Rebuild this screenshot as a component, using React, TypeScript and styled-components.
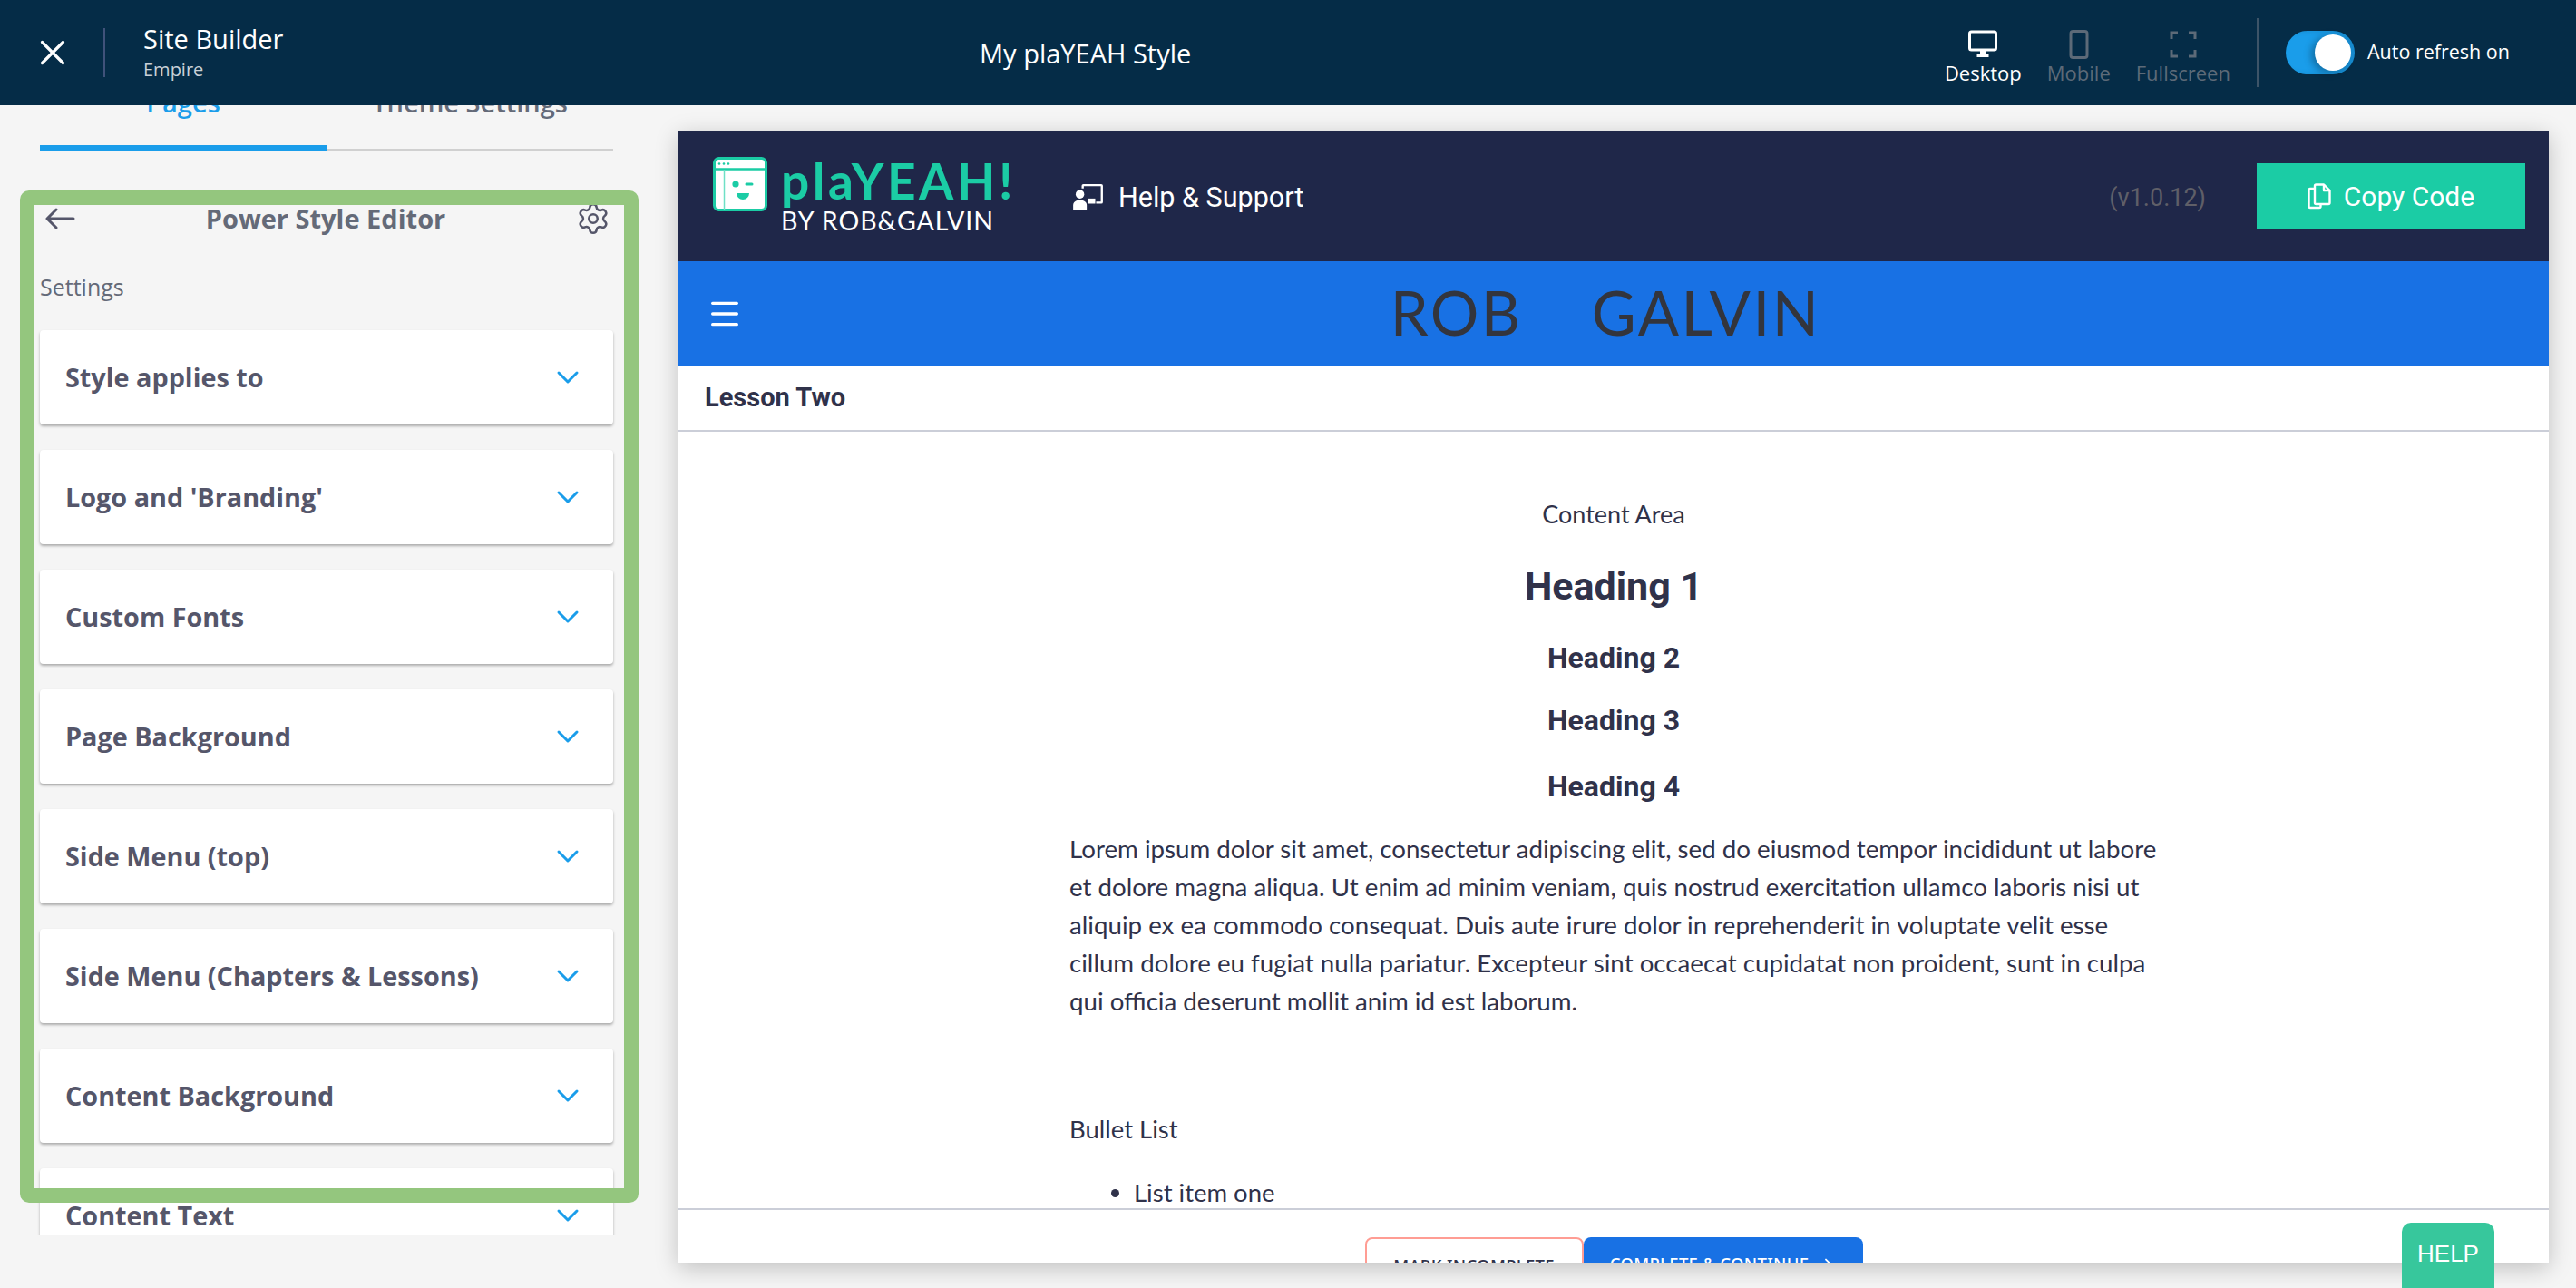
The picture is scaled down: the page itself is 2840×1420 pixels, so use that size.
import React from "react";
import styled, { createGlobalStyle } from "styled-components";
import { X, Settings, ChevronDown, Menu, ArrowRight } from "lucide-react";

const Global = createGlobalStyle`
  html, body { margin: 0; padding: 0; height: 1420px; width: 2840px; overflow: hidden; background: #f5f5f5; font-family: "Open Sans", sans-serif; }
  * { box-sizing: border-box; }
`;

const Page = styled.div`
  width: 2840px; height: 1420px; display: flex; flex-direction: column; position: relative; overflow: hidden; background: #f5f5f5;
`;
const TopBar = styled.header`
  height: 116px; flex: none; background: #052c47; display: flex; align-items: center; color: #fff; position: relative; z-index: 2;
`;
const BarLeft = styled.div`display: flex; align-items: center; padding-left: 35px; width: 1080px; flex: none;`;
const CloseBtn = styled.div`width: 46px; height: 46px; display: flex; align-items: center; justify-content: center; margin-right: 33px;`;
const BarDivider = styled.div`width: 2px; height: 54px; background: #40527a; margin-right: 42px;`;
const BarTitles = styled.div`display: flex; flex-direction: column; margin-top: -2px;`;
const BarTitle = styled.div`font-size: 29px; line-height: 38px; color: #fff;`;
const BarSub = styled.div`font-size: 20px; line-height: 28px; color: #c9d1d8; margin-top: 1px;`;
const BarCenter = styled.div`font-size: 29px; color: #fff; white-space: nowrap;`;
const BarRight = styled.div`flex: 1; display: flex; align-items: center; justify-content: flex-end; padding-right: 73px; height: 100%;`;
const ViewBtn = styled.div<{ $on?: boolean }>`
  display: flex; flex-direction: column; align-items: center; font-size: 22px; line-height: 30px; margin-left: 28px; padding-top: 11px;
  color: ${(p) => (p.$on ? "#fff" : "#5d6a78")}; svg { display: block; margin-bottom: 0; }
`;
const VDivider = styled.div`width: 3px; height: 76px; background: #3d5468; margin: 0 29px 0 29px;`;
const Toggle = styled.div`width: 76px; height: 48px; border-radius: 24px; background: #1a9dea; position: relative; box-shadow: inset -6px 0 6px rgba(0,0,0,.12);`;
const Knob = styled.div`position: absolute; right: 4px; top: 4px; width: 40px; height: 40px; border-radius: 50%; background: #fff; box-shadow: -4px 2px 8px rgba(0,0,0,.3);`;
const ToggleText = styled.div`font-size: 21.5px; color: #fff; margin-left: 14px; margin-top: -4px;`;

const Body = styled.div`flex: 1; display: flex; min-height: 0; position: relative;`;
const Side = styled.aside`width: 748px; flex: none; position: relative; padding: 0 0 0 44px; height: 1246px; overflow: hidden;`;
const Tabs = styled.div`width: 632px; height: 50px; display: flex; border-bottom: 2px solid #d0d0d0; align-items: flex-end;`;
const Tab = styled.div<{ $on?: boolean }>`
  flex: 1; height: 50px; margin-bottom: -2px; font-size: 29px; line-height: 1; font-weight: 600;
  display: flex; justify-content: center; color: ${(p) => (p.$on ? "#1a9dea" : "#646a78")};
  border-bottom: ${(p) => (p.$on ? "6px solid #1a9dea" : "none")};
  span { transform: translateY(-18px); display: block; }
`;
const EditorHead = styled.div`width: 632px; height: 50px; margin-top: 50px; display: flex; align-items: center; justify-content: space-between; padding: 0 3px 0 6px; color: #55566a;`;
const EditorTitle = styled.div`font-size: 29px; font-weight: 700; color: #646a78; margin-top: -2px;`;
const SettingsLabel = styled.div`font-size: 25px; color: #646a78; margin-top: 33px; line-height: 34px; width: 632px;`;
const Cards = styled.div`margin-top: 31px; display: flex; flex-direction: column; gap: 28px; width: 632px;`;
const Card = styled.div`
  height: 104px; flex: none; background: #fff; border-radius: 4px; box-shadow: 0 2px 3px rgba(0,0,0,.3); display: flex; align-items: center; justify-content: space-between; padding: 0 30px 0 28px;
  font-size: 28.8px; font-weight: 700; color: #55566a;
`;
const CardLabel = styled.span`transform: translateY(-1px);`;
const CardChevron = styled(ChevronDown)`color: #1a9dea;`;
const GreenFrame = styled.div`
  position: absolute; left: 22px; top: 210px; width: 682px; height: 1116px; border: 16px solid #94c67e; border-radius: 10px; z-index: 3; pointer-events: none;
`;

const Preview = styled.main`
  position: absolute; left: 748px; top: 28px; width: 2062px; height: 1248px; background: #fff; box-shadow: 0 6px 24px rgba(0,0,0,.22); display: flex; flex-direction: column; overflow: hidden;
`;
const Brand = styled.div`height: 144px; flex: none; background: #1f2749; display: flex; align-items: center; padding: 0 26px 0 38px; color: #fff;`;
const LogoBox = styled.div`display: flex; align-items: flex-start; width: 396px; margin-top: -2px;`;
const LogoWords = styled.div`display: flex; flex-direction: column; margin-left: 15px;`;
const LogoName = styled.div`font-family: Lato, sans-serif; font-size: 55px; font-weight: 700; line-height: 54px; color: #1bcca5; letter-spacing: 3.600px; margin-top: -1px;`;
const LogoBy = styled.div`font-family: Lato, sans-serif; font-size: 28.500px; font-weight: 400; line-height: 30px; color: #fff; letter-spacing: 1px; margin-top: 2px;`;
const Support = styled.div`display: flex; align-items: center; font-family: Roboto, sans-serif; font-size: 30.5px; color: #fff; gap: 15px; margin-top: 2px;`;
const Version = styled.div`margin-left: auto; font-family: Roboto, sans-serif; font-size: 27px; color: #5f5f68; margin-right: 56px; margin-top: 4px;`;
const CopyBtn = styled.div`width: 296px; height: 72px; background: #1bcca5; display: flex; align-items: center; justify-content: center; gap: 14px; font-family: Roboto, sans-serif; font-size: 30px; color: #fff;`;
const BlueBar = styled.div`height: 116px; flex: none; background: #1871e4; display: flex; align-items: center; justify-content: center; position: relative; padding-bottom: 4px;`;
const MenuBtn = styled.div`position: absolute; left: 31px; top: 50%; transform: translateY(-50%); display: flex; color: #fff;`;
const SiteName = styled.div`font-family: Lato, sans-serif; font-weight: 400; font-size: 67px; color: #33353d; letter-spacing: 2.500px; display: flex; gap: 76px; margin-right: 18px;`;
const LessonRow = styled.div`height: 72px; flex: none; border-bottom: 2px solid #cbced8; display: flex; align-items: center; padding: 0 0 2px 29px; font-family: Roboto, sans-serif; font-weight: 700; font-size: 29px; color: #30324a;`;
const Content = styled.div`flex: 1; min-height: 0; overflow: hidden; display: flex; flex-direction: column; align-items: center; color: #30324a; padding-top: 73px;`;
const ContentLabel = styled.div`font-size: 27px; line-height: 36px; font-family: Lato, sans-serif;`;
const H1 = styled.h1`font-family: Roboto, sans-serif; font-size: 43px; font-weight: 700; line-height: 56px; margin: 33px 0 0;`;
const H2 = styled.h2<{ $gap: number }>`font-family: Roboto, sans-serif; font-size: 32px; font-weight: 700; line-height: 44px; margin: ${(p) => p.$gap}px 0 0;`;
const Para = styled.p`font-family: Lato, sans-serif; font-size: 27.700px; line-height: 42px; width: 1200px; margin: 26px 0 0; white-space: nowrap;`;
const Bullet = styled.div`font-family: Lato, sans-serif; font-size: 27.500px; line-height: 42px; width: 1200px; margin-top: 99px;`;
const UL = styled.ul`font-family: Lato, sans-serif; font-size: 27.500px; line-height: 42px; width: 1200px; margin: 28px 0 0; padding-left: 71px;`;
const Footer = styled.div`height: 60px; flex: none; border-top: 2px solid #cbced8; display: flex; justify-content: center; padding-top: 30px;`;
const FootBtn = styled.div<{ $primary?: boolean }>`
  height: 70px; border-radius: 8px; padding-top: 16px; text-align: center; font-family: "Noto Sans", sans-serif; font-size: 18.500px; font-weight: 500; letter-spacing: .3px; flex: none;
  width: ${(p) => (p.$primary ? "308px" : "241px")};
  background: ${(p) => (p.$primary ? "#1871e4" : "#fff")};
  color: ${(p) => (p.$primary ? "#fff" : "#30324a")};
  border: ${(p) => (p.$primary ? "none" : "2px solid #ff9d94")};
  svg { vertical-align: middle; margin-left: 8px; }
`;
const Help = styled.div`
  position: absolute; left: 2648px; top: 1348px; width: 102px; height: 72px; background: #37c79c; border-radius: 10px 10px 0 0; color: #fff; font-family: "Liberation Sans", sans-serif; font-size: 26px; padding-top: 19px; text-align: center; z-index: 4;
`;

const sections = ["Style applies to", "Logo and 'Branding'", "Custom Fonts", "Page Background", "Side Menu (top)", "Side Menu (Chapters & Lessons)", "Content Background", "Content Text"];

const DesktopIcon = () => (
  <svg width="36" height="32" viewBox="0 0 36 32">
    <rect x="3.500" y="2" width="29" height="20" rx="2" fill="none" stroke="currentColor" strokeWidth="3" />
    <path d="M15 23h6v3h-6z M11.500 26.500h13V30h-13z" fill="currentColor" />
  </svg>
);
const PhoneIcon = () => (
  <svg width="24" height="32" viewBox="0 0 24 32">
    <rect x="3" y="1.500" width="18" height="29" rx="2.500" fill="none" stroke="currentColor" strokeWidth="3" />
  </svg>
);
const FullscreenIcon = () => (
  <svg width="32" height="32" viewBox="0 0 32 32" fill="none" stroke="currentColor" strokeWidth="3">
    <path d="M3 10V3h7M22 3h7v7M29 22v7h-7M10 29H3v-7" />
  </svg>
);
const BackArrow = () => (
  <svg width="33" height="24" viewBox="0 0 33 24" fill="none" stroke="currentColor" strokeWidth="3" strokeLinecap="round" strokeLinejoin="round">
    <path d="M31 12H2M12 2L2 12l10 10" />
  </svg>
);
const CopyGlyph = () => (
  <svg width="26" height="29" viewBox="0 0 26 29" fill="none" stroke="#fff" strokeWidth="2.400" strokeLinejoin="round">
    <path d="M8 6H3a1.500 1.500 0 0 0-1.500 1.500v18A1.500 1.500 0 0 0 3 27h10a1.500 1.500 0 0 0 1.500-1.500V23" />
    <path d="M8 3a1.500 1.500 0 0 1 1.500-1.500H18L24.500 8v13.500A1.500 1.500 0 0 1 23 23H9.500A1.500 1.500 0 0 1 8 21.500z" />
    <path d="M18 1.500V8h6.500" />
  </svg>
);
const LogoMark = styled.svg`flex: none;`;
const Logo = () => (
  <LogoMark width="60" height="60" viewBox="0 0 60 60">
    <rect x="1.500" y="1.500" width="57" height="57" rx="5" fill="#fff" stroke="#1bcca5" strokeWidth="3" />
    <path d="M3 13.500h54" stroke="#1bcca5" strokeWidth="2.500" />
    <path d="M12.500 14v44" stroke="#6fe0c6" strokeWidth="1.500" />
    <circle cx="7" cy="7.500" r="1.300" fill="#1bcca5" /><circle cx="12" cy="7.500" r="1.300" fill="#1bcca5" /><circle cx="17" cy="7.500" r="1.300" fill="#1bcca5" />
    <circle cx="25" cy="30" r="3.600" fill="#1bcca5" />
    <path d="M37 30h6" stroke="#1bcca5" strokeWidth="3" strokeLinecap="round" />
    <path d="M26 40h14a7 7 0 0 1-14 0z" fill="#1bcca5" />
  </LogoMark>
);
const SupportIcon = () => (
  <svg width="36" height="30" viewBox="0 0 38 32" fill="#fff">
    <path d="M11 6V3a2 2 0 0 1 2-2h21a2 2 0 0 1 2 2v19a2 2 0 0 1-2 2h-6v-2.500h5.500V3.500h-20V6z" />
    <rect x="19" y="18" width="8" height="6" />
    <circle cx="9" cy="13" r="5" />
    <path d="M1 32v-6c0-4 3-6 8-6s8 2 8 6v6z" />
  </svg>
);

export default function App() {
  return (
    <Page>
      <Global />
      <TopBar>
        <BarLeft>
          <CloseBtn><X size={46} strokeWidth={1.7} color="#fff" /></CloseBtn>
          <BarDivider />
          <BarTitles>
            <BarTitle>Site Builder</BarTitle>
            <BarSub>Empire</BarSub>
          </BarTitles>
        </BarLeft>
        <BarCenter>My plaYEAH Style</BarCenter>
        <BarRight>
          <ViewBtn $on><DesktopIcon />Desktop</ViewBtn>
          <ViewBtn><PhoneIcon />Mobile</ViewBtn>
          <ViewBtn><FullscreenIcon />Fullscreen</ViewBtn>
          <VDivider />
          <Toggle><Knob /></Toggle>
          <ToggleText>Auto refresh on</ToggleText>
        </BarRight>
      </TopBar>
      <Body>
        <Side>
          <Tabs>
            <Tab $on><span>Pages</span></Tab>
            <Tab><span>Theme Settings</span></Tab>
          </Tabs>
          <EditorHead>
            <BackArrow />
            <EditorTitle>Power Style Editor</EditorTitle>
            <Settings size={38} strokeWidth={1.6} />
          </EditorHead>
          <SettingsLabel>Settings</SettingsLabel>
          <Cards>
            {sections.map((s) => (
              <Card key={s}><CardLabel>{s}</CardLabel><CardChevron size={40} strokeWidth={1.8} /></Card>
            ))}
          </Cards>
        </Side>
        <Preview>
          <Brand>
            <LogoBox>
              <Logo />
              <LogoWords>
                <LogoName>plaYEAH!</LogoName>
                <LogoBy>BY ROB&amp;GALVIN</LogoBy>
              </LogoWords>
            </LogoBox>
            <Support><SupportIcon />Help &amp; Support</Support>
            <Version>(v1.0.12)</Version>
            <CopyBtn><CopyGlyph />Copy Code</CopyBtn>
          </Brand>
          <BlueBar>
            <MenuBtn><Menu size={40} strokeWidth={2} /></MenuBtn>
            <SiteName><span>ROB</span><span>GALVIN</span></SiteName>
          </BlueBar>
          <LessonRow>Lesson Two</LessonRow>
          <Content>
            <ContentLabel>Content Area</ContentLabel>
            <H1>Heading 1</H1>
            <H2 $gap={29}>Heading 2</H2>
            <H2 $gap={25}>Heading 3</H2>
            <H2 $gap={29}>Heading 4</H2>
            <Para>
              Lorem ipsum dolor sit amet, consectetur adipiscing elit, sed do eiusmod tempor incididunt ut labore<br />
              et dolore magna aliqua. Ut enim ad minim veniam, quis nostrud exercitation ullamco laboris nisi ut<br />
              aliquip ex ea commodo consequat. Duis aute irure dolor in reprehenderit in voluptate velit esse<br />
              cillum dolore eu fugiat nulla pariatur. Excepteur sint occaecat cupidatat non proident, sunt in culpa<br />
              qui officia deserunt mollit anim id est laborum.
            </Para>
            <Bullet>Bullet List</Bullet>
            <UL><li>List item one</li></UL>
          </Content>
          <Footer>
            <FootBtn>MARK INCOMPLETE</FootBtn>
            <FootBtn $primary>COMPLETE &amp; CONTINUE<ArrowRight size={22} /></FootBtn>
          </Footer>
        </Preview>
      </Body>
      <GreenFrame />
      <Help>HELP</Help>
    </Page>
  );
}
